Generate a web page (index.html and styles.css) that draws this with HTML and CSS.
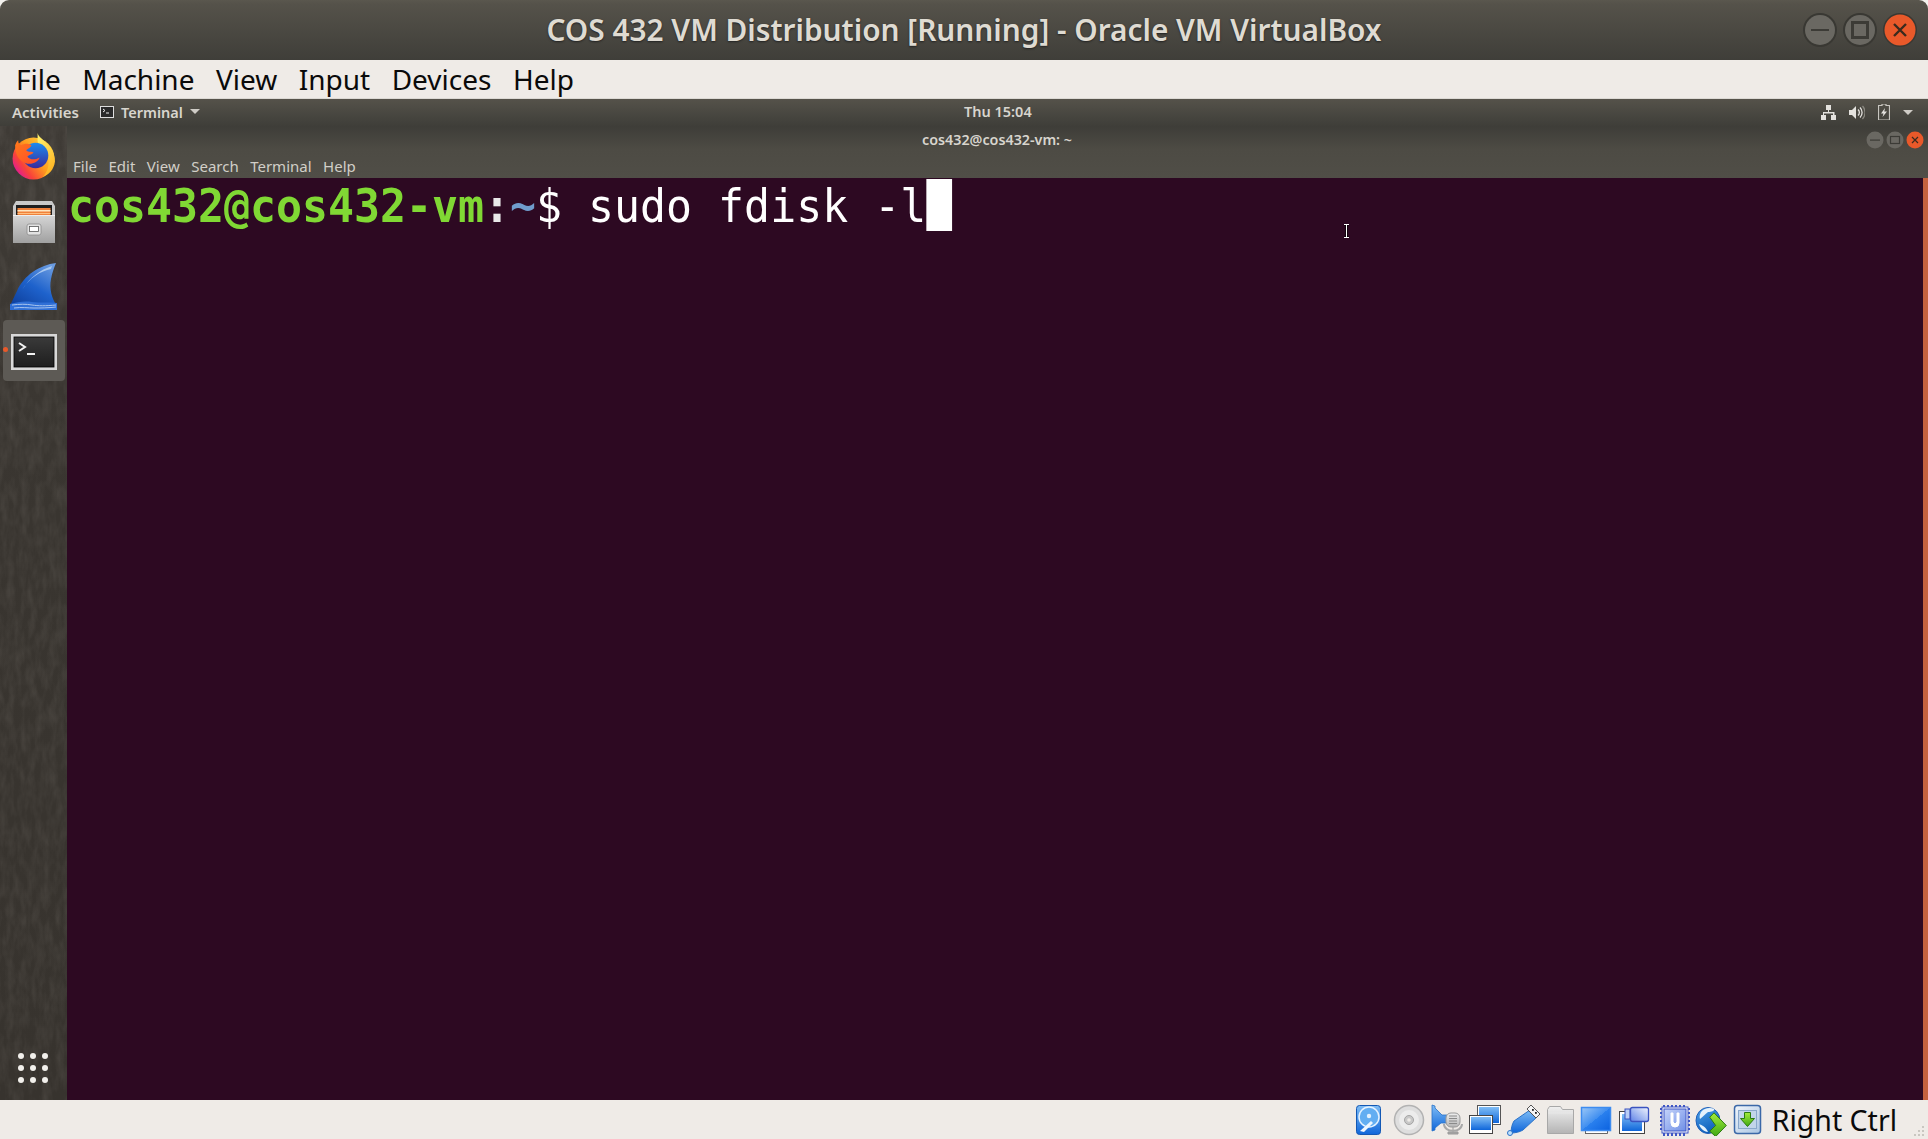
FILE: index.html
```html
<!DOCTYPE html>
<html lang="en">
<head>
<meta charset="utf-8">
<title>COS 432 VM Distribution [Running] - Oracle VM VirtualBox</title>
<link rel="stylesheet" href="styles.css">
</head>
<body>
<svg class="defs" width="0" height="0" aria-hidden="true">
  <defs>
    <linearGradient id="ffBase" x1="0.9" y1="0.2" x2="0.1" y2="0.8"><stop offset="0" stop-color="#ffd23c"/><stop offset="0.45" stop-color="#ff9a1e"/><stop offset="0.8" stop-color="#f8423a"/><stop offset="1" stop-color="#e3208a"/></linearGradient>
    <linearGradient id="ffFlame" x1="0.3" y1="0" x2="0.7" y2="1"><stop offset="0" stop-color="#fff06a"/><stop offset="1" stop-color="#ffb01e"/></linearGradient>
    <linearGradient id="ffGlobe" x1="0.5" y1="0" x2="0.5" y2="1"><stop offset="0" stop-color="#1c8cf0"/><stop offset="1" stop-color="#3a2a9c"/></linearGradient>
    <linearGradient id="ffFox" x1="0" y1="0" x2="1" y2="1"><stop offset="0" stop-color="#ff7a1a"/><stop offset="1" stop-color="#ff4a2a"/></linearGradient>
    <linearGradient id="cab" x1="0" y1="0" x2="0" y2="1"><stop offset="0" stop-color="#d6d6d6"/><stop offset="1" stop-color="#a0a0a0"/></linearGradient>
    <linearGradient id="shark" x1="0.8" y1="0" x2="0.1" y2="1"><stop offset="0" stop-color="#6a9be0"/><stop offset="0.5" stop-color="#1e62cc"/><stop offset="1" stop-color="#0e3f9c"/></linearGradient>
    <linearGradient id="termFace" x1="0" y1="0" x2="0" y2="1"><stop offset="0" stop-color="#3a3a3a"/><stop offset="1" stop-color="#1e1e1e"/></linearGradient>
    <linearGradient id="vbBlue" x1="0" y1="0" x2="0" y2="1"><stop offset="0" stop-color="#7fbdf5"/><stop offset="1" stop-color="#0f66da"/></linearGradient>
    <linearGradient id="vbDiag" x1="0" y1="0" x2="1" y2="1"><stop offset="0" stop-color="#9cc8f7"/><stop offset="0.5" stop-color="#3f8ef0"/><stop offset="0.5" stop-color="#2a80ee"/><stop offset="1" stop-color="#0b62e0"/></linearGradient>
    <linearGradient id="vbCam" x1="0" y1="1" x2="1" y2="0"><stop offset="0" stop-color="#5f82e8"/><stop offset="0.5" stop-color="#a8bdf2"/><stop offset="1" stop-color="#f2f5fd"/></linearGradient>
    <linearGradient id="vbGrey" x1="0" y1="0" x2="0" y2="1"><stop offset="0" stop-color="#f0f0f0"/><stop offset="1" stop-color="#b4b4b4"/></linearGradient>
    <linearGradient id="vbGreen" x1="0" y1="0" x2="0" y2="1"><stop offset="0" stop-color="#a4ec3c"/><stop offset="1" stop-color="#3ea812"/></linearGradient>
    <linearGradient id="vbChip" x1="0" y1="0" x2="1" y2="1"><stop offset="0" stop-color="#c6d4fa"/><stop offset="1" stop-color="#6f8fe6"/></linearGradient>
    <linearGradient id="vbSq" x1="0" y1="0" x2="1" y2="1"><stop offset="0" stop-color="#f2f6fb"/><stop offset="1" stop-color="#a9c4e2"/></linearGradient>
    <linearGradient id="vbGlobe" x1="0.2" y1="0" x2="0.6" y2="1"><stop offset="0" stop-color="#4a9ee8"/><stop offset="1" stop-color="#0b5cb8"/></linearGradient>
    <filter id="grain" x="0" y="0" width="100%" height="100%"><feTurbulence type="fractalNoise" baseFrequency="0.14 0.05" numOctaves="3" seed="4"/><feColorMatrix values="0 0 0 0 0.5  0 0 0 0 0.46  0 0 0 0 0.42  0.2 0 0 0 -0.07"/></filter>
  </defs>
</svg>

<div class="window">
  <header class="titlebar">
    <h1 class="title">COS 432 VM Distribution [Running] - Oracle VM VirtualBox</h1>
    <div class="wm-buttons">
      <svg class="wm" viewBox="0 0 36 36"><circle cx="18" cy="18" r="17" class="wm-ring"/><circle cx="18" cy="18" r="15" class="wm-face"/><rect x="9" y="17" width="18" height="2" class="wm-glyph"/></svg>
      <svg class="wm" viewBox="0 0 36 36"><circle cx="18" cy="18" r="17" class="wm-ring"/><circle cx="18" cy="18" r="15" class="wm-face"/><rect x="10.500" y="10.500" width="15" height="15" class="wm-box"/></svg>
      <svg class="wm" viewBox="0 0 36 36"><circle cx="18" cy="18" r="17" class="wm-ring"/><circle cx="18" cy="18" r="15.500" class="wm-close"/><path d="M12 12 24 24M24 12 12 24" class="wm-x"/></svg>
    </div>
  </header>

  <nav class="menubar">
    <span>File</span><span>Machine</span><span>View</span><span>Input</span><span>Devices</span><span>Help</span>
  </nav>

  <main class="guest">
    <div class="panel">
      <span class="activities">Activities</span>
      <span class="app">
        <svg class="app-icon" viewBox="0 0 14 12"><rect x="0.500" y="0.500" width="13" height="11" fill="#2a2a2a" stroke="#ddd"/><path d="M3 3l2 1.500L3 6M6 7h3" fill="none" stroke="#eee"/></svg>
        Terminal
        <i class="caret"></i>
      </span>
      <span class="clock">Thu 15:04</span>
      <span class="tray">
        <svg class="tray-net" viewBox="0 0 15 15"><path d="M5 0h5v5H8v2h5.500v3H15v5h-5v-5h2V8.500H3V10h2v5H0v-5h2V7h5V5H5z" fill="#e4e2de"/></svg>
        <svg class="tray-vol" viewBox="0 0 16 15"><path d="M0 5h3l4-4v13l-4-4H0z" fill="#e4e2de"/><path d="M9 4.500a4 4 0 0 1 0 6M11 2.500a7 7 0 0 1 0 10" fill="none" stroke="#e4e2de" stroke-width="1.300"/><path d="M13.500 1a9.500 9.500 0 0 1 0 13" fill="none" stroke="#8a8880" stroke-width="1.300"/></svg>
        <svg class="tray-bat" viewBox="0 0 12 16"><path d="M4 0h4v1.500h3.500V16H.5V1.500H4z" fill="none" stroke="#c8c6c0" stroke-width="1.200"/><path d="M7 4 3 9.500h2.500L4.500 13 9 7.500H6.300z" fill="#e4e2de"/></svg>
        <i class="caret tray-caret"></i>
      </span>
    </div>

    <div class="desktop">
      <aside class="dock">
        <svg class="dock-grain" width="67" height="974"><rect width="67" height="974" filter="url(#grain)"/></svg>
        <svg class="dock-icon ff" viewBox="0 0 44 46">
          <circle cx="22" cy="25" r="20.500" fill="url(#ffBase)"/>
          <path d="M26 0c1 4 5 6 9 10 6 6 8 12 8 18-1 8-6 13-12 15 5-5 7-12 5-19C34 17 27 14 26 8z" fill="url(#ffFlame)"/>
          <circle cx="24" cy="22" r="12.500" fill="url(#ffGlobe)"/>
          <path d="M4 12c1-3 2-4 3-5 0 3 1 4 3 5 3-2 7-2 10 0-1 3-4 3-5 5 1 2 4 1 7 2-1 2-4 2-6 4 2 3 7 4 12 1-1 4-7 7-12 6C7 28 4 20 4 12z" fill="url(#ffFox)"/>
        </svg>
        <svg class="dock-icon files" viewBox="0 0 42 43">
          <path d="M3 1h36l3 5v36H0V6z" fill="#c9c9c9"/>
          <rect x="3" y="5" width="36" height="12" fill="#1e1e1e"/>
          <rect x="4.500" y="8" width="33" height="9" fill="#f0813a"/>
          <rect x="4.500" y="10" width="33" height="1.500" fill="#ffe6c0"/>
          <rect x="4.500" y="13" width="33" height="1" fill="#ffc080"/>
          <rect x="0" y="15" width="42" height="28" fill="url(#cab)"/>
          <rect x="0" y="15" width="42" height="1" fill="#eee"/>
          <rect x="14" y="24" width="14" height="11" rx="2" fill="#e2e2e2" stroke="#8c8c8c" stroke-width="0.800"/>
          <rect x="16.500" y="26.500" width="9" height="5" fill="#fff" stroke="#555" stroke-width="0.800"/>
        </svg>
        <svg class="dock-icon shark" viewBox="0 0 48 47">
          <path d="M46 0C30 2 14 12 7 28 4 34 2 38 0 43h47c-5-7-8-17-6-27 1-6 3-11 5-16z" fill="url(#shark)"/>
          <path d="M42 3C30 7 20 14 12 27 19 15 31 8 41 6z" fill="#a8c8f0"/>
          <path d="M0 41c8-2 14-3 22-2 8 1 17 0 25 1v7H0z" fill="#2f6fd6"/>
          <path d="M2 42c8-1 14-1 20 0s14 1 24 0M4 45c8-1 14 0 20 0s14 0 22-1" fill="none" stroke="#a8c4ee" stroke-width="1"/>
        </svg>
        <div class="dock-active">
          <i class="running"></i>
          <svg class="term-icon" viewBox="0 0 46 36"><rect x="0" y="0" width="46" height="36" fill="#d8d8d8"/><rect x="3" y="3" width="40" height="30" fill="url(#termFace)"/><rect x="3" y="3" width="40" height="30" fill="none" stroke="#000" stroke-width="0.800"/><path d="M8 9l6 4-6 4" fill="none" stroke="#f2f2f2" stroke-width="2"/><rect x="16" y="19" width="8" height="2" fill="#f2f2f2"/></svg>
        </div>
        <div class="apps-grid"><i></i><i></i><i></i><i></i><i></i><i></i><i></i><i></i><i></i></div>
      </aside>

      <section class="term-window">
        <div class="term-head">
          <div class="term-title">cos432@cos432-vm: ~</div>
          <div class="term-buttons">
            <svg class="tb" viewBox="0 0 18 18"><circle cx="9" cy="9" r="8.500" class="wm-face"/><rect x="4" y="8.500" width="10" height="1.200" class="wm-glyph"/></svg>
            <svg class="tb" viewBox="0 0 18 18"><circle cx="9" cy="9" r="8.500" class="wm-face"/><rect x="4.500" y="5.500" width="9" height="7" class="wm-box wm-box-s"/></svg>
            <svg class="tb" viewBox="0 0 18 18"><circle cx="9" cy="9" r="8.500" class="wm-close"/><path d="M6 6l6 6M12 6l-6 6" class="wm-x wm-x-s"/></svg>
          </div>
          <nav class="term-menu"><span>File</span><span>Edit</span><span>View</span><span>Search</span><span>Terminal</span><span>Help</span></nav>
        </div>
        <div class="term-body">
          <div class="line"><b class="p-user">cos432@cos432-vm</b><b class="p-colon">:</b><b class="p-path">~</b><span class="p-dollar">$</span> sudo fdisk -l<span class="cursor">&nbsp;</span></div>
          <svg class="ibeam" viewBox="0 0 7 14"><path d="M1 .5h5M3.500.5v13M1 13.500h5" fill="none" stroke="#000" stroke-width="2.200"/><path d="M1 .5h5M3.500.5v13M1 13.500h5" fill="none" stroke="#fff" stroke-width="1"/></svg>
          <i class="scroll-edge"></i>
        </div>
      </section>
    </div>
  </main>

  <footer class="statusbar">
    <svg class="st" viewBox="0 0 38 32"><rect x="4.500" y="1.500" width="24" height="29" rx="3" fill="url(#vbBlue)" stroke="#1358b4"/><circle cx="17" cy="13" r="10" fill="#63aef2" stroke="#e4f2ff" stroke-width="1.500"/><circle cx="17" cy="12" r="2.200" fill="#e4f2ff"/><path d="M8 27l11-10 2 2-9 9z" fill="#eef6ff"/></svg>
    <svg class="st" viewBox="0 0 38 32"><circle cx="19" cy="16" r="14.500" fill="#dedede" stroke="#b2b2b2" stroke-width="1.500"/><circle cx="19" cy="16" r="10" fill="#ececec"/><circle cx="19" cy="16" r="4.500" fill="#c8c8c8" stroke="#a4a4a4"/><circle cx="19" cy="16" r="1.800" fill="#efece8"/></svg>
    <svg class="st" viewBox="0 0 38 32"><path d="M4 1l3 1v2l7 7h5v8h-6l-6 5v2l-3 1z" fill="url(#vbBlue)" stroke="#2a72c8" stroke-width="0.800"/><rect x="18" y="9" width="14" height="14" rx="5" fill="url(#vbGrey)" stroke="#999"/><path d="M21 12h8M21 14.500h8M21 17h8M21 19.500h8" stroke="#8a8a8a"/><path d="M25 23v5M20 30h10v-2H20z" fill="#a6a6a6" stroke="#999"/><path d="M16 20c0 9 18 9 18 0" fill="none" stroke="#a8a8a8" stroke-width="2"/></svg>
    <svg class="st" viewBox="0 0 38 32"><rect x="11.500" y="1.500" width="23" height="19" fill="#fff" stroke="#555"/><rect x="13" y="3" width="20" height="16" fill="url(#vbBlue)"/><rect x="3.500" y="11.500" width="23" height="18" fill="#fff" stroke="#444"/><rect x="5" y="13" width="20" height="13" fill="url(#vbBlue)"/></svg>
    <svg class="st" viewBox="0 0 38 32"><path d="M26 6l7 7-14 13c-3 2-8 3-12 3 0-4 1-9 3-12z" fill="url(#vbBlue)" stroke="#2a72c8"/><path d="M27 1l9 9-4 4-9-9z" fill="#f4f4f4" stroke="#555"/><rect x="28" y="5" width="1.800" height="1.800" fill="#222"/><rect x="31" y="8" width="1.800" height="1.800" fill="#222"/><circle cx="6" cy="29" r="2.500" fill="#bfe0fb" stroke="#2a72c8"/></svg>
    <svg class="st" viewBox="0 0 38 32"><path d="M5.500 5.500l2-3h11l2 3h11v24h-26z" fill="url(#vbGrey)" stroke="#a8a8a8"/><path d="M6 9h25" stroke="#e8e8e8"/></svg>
    <svg class="st" viewBox="0 0 38 32"><rect x="5.500" y="26" width="22" height="3.500" fill="#fff" stroke="#444" stroke-width="0.800"/><rect x="1.500" y="3.500" width="29" height="23" fill="url(#vbDiag)" stroke="#3d8cf0" stroke-width="1.500"/></svg>
    <svg class="st" viewBox="0 0 38 32"><rect x="1.500" y="7.500" width="25" height="22" fill="#fff" stroke="#444"/><rect x="4" y="10" width="20" height="17" fill="url(#vbBlue)"/><rect x="7" y="5" width="5" height="10" fill="#b9cdf5" stroke="#3b53c0"/><rect x="12.500" y="3.500" width="18" height="14" rx="2" fill="url(#vbCam)" stroke="#3b53c0" stroke-width="1.300"/></svg>
    <svg class="st" viewBox="0 0 38 32"><path d="M8 1v31M12 1v31M16 1v31M20 1v31M24 1v31M28 1v31M4 5h30M4 9h30M4 13h30M4 17h30M4 21h30M4 25h30" stroke="#3f56c4" stroke-width="2"/><rect x="6" y="3" width="26" height="26" fill="#fff" stroke="#3f56c4"/><rect x="8" y="5" width="22" height="22" fill="url(#vbChip)" stroke="#3f56c4"/><path d="M15 9v10a4 4 0 0 0 8 0V9h-2v9l-2 2-2-2V9z" fill="#fff" stroke="#fff"/></svg>
    <svg class="st" viewBox="0 0 38 32"><ellipse cx="14" cy="16.500" rx="12" ry="13" fill="url(#vbGlobe)" stroke="#1f5fb8"/><path d="M7 8c3-4 9-5 13-3 1 2-3 3-6 3-3 2-5 5-8 7-1-2 0-5 1-7zM5 20c3 1 7 3 9 8-4 0-8-4-9-8z" fill="#e6f2fc"/><path d="M15.700 13.200 20 8.800l12.300 12.700L21.700 32.500l-6-5.300 6-5.700z" fill="url(#vbGreen)" stroke="#2c7a10"/></svg>
    <svg class="st" viewBox="0 0 38 32"><rect x="2.500" y="1.500" width="26" height="28" rx="3" fill="url(#vbSq)" stroke="#3b68a8" stroke-width="1.500"/><rect x="6.500" y="6.500" width="18" height="18" fill="#c2d5ea" stroke="#8aa8cc"/><path d="M12.500 8.500h6v6h4l-7 8-7-8h4z" fill="url(#vbGreen)" stroke="#2c7a10"/></svg>
    <span class="host-key">Right Ctrl</span>
    <svg class="grip" viewBox="0 0 14 14"><g fill="#c9c6c0"><rect x="10" y="2" width="2" height="2"/><rect x="6" y="6" width="2" height="2"/><rect x="10" y="6" width="2" height="2"/><rect x="2" y="10" width="2" height="2"/><rect x="6" y="10" width="2" height="2"/><rect x="10" y="10" width="2" height="2"/></g></svg>
  </footer>
</div>
</body>
</html>
```

FILE: styles.css
```css
* { box-sizing: border-box; }
html, body { margin: 0; height: 100%; background: #f4f2ee; overflow: hidden; }
body { font-family: "Noto Sans", "Open Sans", sans-serif; }
.defs { position: absolute; }

.window { display: flex; flex-direction: column; width: 1928px; height: 1139px; }

/* Host window title bar */
.titlebar {
  position: relative; height: 60px; flex: none;
  display: flex; align-items: center; justify-content: center;
  background: linear-gradient(#5a574e 0, #55524a 4px, #3f3e39 100%);
  border-radius: 9px 9px 0 0;
}
.title {
  margin: -2px 0 0; font-size: 29.800px; font-weight: 600; color: #dfdbd2;
  text-shadow: 0 1px 2px #222;
}
.wm-buttons { position: absolute; right: 10px; top: 12px; display: flex; gap: 4px; }
.wm { width: 36px; height: 36px; display: block; }
.wm-ring { fill: #393833; }
.wm-face { fill: #6a6862; }
.wm-glyph { fill: #3c3b36; }
.wm-box { fill: none; stroke: #3c3b36; stroke-width: 3; }
.wm-box-s { stroke-width: 1.200; }
.wm-close { fill: #e9592a; }
.wm-x { fill: none; stroke: #3a2a1e; stroke-width: 2.400; }
.wm-x-s { stroke-width: 1.200; }

/* Host menu */
.menubar {
  height: 39px; flex: none; background: #efebe7;
  display: flex; align-items: center; padding-left: 16px; gap: 21.500px;
  font-size: 28px; color: #0a0a0a;
  border-bottom: 1px solid #dcd9d4;
}

/* Guest */
.guest { flex: 1; display: flex; flex-direction: column; min-height: 0; }
.panel {
  position: relative; height: 27px; flex: none;
  display: flex; align-items: center; padding-left: 12px;
  background: linear-gradient(#55524a, #45443e 70%, #3f3e39);
  color: #d8d5ce; font-size: 15px; font-weight: 600;
}
.activities { width: 88px; position: relative; top: -1px; }
.app { display: flex; align-items: center; gap: 7px; position: relative; top: -1px; font-size: 14.500px; }
.app-icon { width: 14px; height: 12px; }
.caret { width: 0; height: 0; border: 5px solid transparent; border-top: 5px solid #cfccc6; border-bottom: 0; }
.clock { position: absolute; left: 964px; top: 2px; font-size: 14.500px; }
.tray { position: absolute; right: 15px; top: 5px; display: flex; align-items: center; gap: 13px; }
.tray-net { width: 15px; height: 15px; }
.tray-vol { width: 16px; height: 15px; }
.tray-bat { width: 12px; height: 16px; }

.desktop { flex: 1; display: flex; min-height: 0; }

/* Dock */
.dock {
  position: relative; width: 67px; flex: none;
  display: flex; flex-direction: column; align-items: center;
  padding-top: 8px; overflow: hidden;
  background: linear-gradient(#3f3b36, #393530 40%, #37332e);
}
.dock-grain { position: absolute; left: 0; top: 0; }
.dock-icon { position: relative; display: block; }
.ff { width: 45px; height: 47px; margin-top: -1px; }
.files { width: 42px; height: 43px; margin-top: 20px; }
.shark { width: 48px; height: 47px; margin-top: 20px; }
.dock-active {
  position: relative; width: 62px; height: 61px; margin-top: 10px;
  background: #5d5a55; border-radius: 4px;
  display: flex; align-items: center; justify-content: center;
  padding-top: 2px;
}
.term-icon { width: 46px; height: 36px; }
.running { position: absolute; left: 0; top: 27px; width: 5px; height: 5px; border-radius: 50%; background: #e9592a; }
.apps-grid {
  position: absolute; left: 18px; bottom: 17px;
  display: grid; grid-template-columns: repeat(3, 6px); grid-auto-rows: 6px; gap: 6px;
}
.apps-grid i { background: #f2f0ec; border-radius: 50%; }

/* Terminal window */
.term-window { flex: 1; display: flex; flex-direction: column; min-width: 0; }
.term-head {
  position: relative; height: 52px; flex: none;
  background: linear-gradient(#3e3d38, #4d4b44 45%, #504e47);
  color: #d8d5ce;
}
.term-title { position: absolute; left: 855px; top: 4px; font-size: 14.300px; font-weight: 600; }
.term-buttons { position: absolute; right: 4px; top: 5px; display: flex; gap: 2px; }
.tb { width: 18px; height: 18px; display: block; }
.term-menu { position: absolute; left: 6px; top: 30px; display: flex; gap: 11.500px; font-size: 15px; color: #d2cfc8; }

.term-body { position: relative; flex: 1; background: #2d0922; padding: 2px 0 0 0; overflow: hidden; }
.line {
  font-family: "DejaVu Sans Mono", "Liberation Mono", monospace;
  font-size: 47px; line-height: 52px; color: #fff; white-space: pre;
  transform: scaleX(0.919); transform-origin: 0 0;
  margin-left: 1px;
}
.line b { font-weight: 700; }
.p-user { color: #80d834; }
.p-colon { color: #e8e8e8; }
.p-path { color: #6f9ccc; }
.cursor { display: inline-block; height: 52px; vertical-align: top; margin-top: -1px; background: #fff; }
.ibeam { position: absolute; left: 1276px; top: 46px; width: 7px; height: 14px; }
.scroll-edge { position: absolute; right: 0; top: 0; bottom: 0; width: 5px; background: #c4623f; }

/* Status bar */
.statusbar {
  position: relative; height: 39px; flex: none; background: #efebe7;
  display: flex; align-items: center; justify-content: flex-end; padding-right: 31px;
}
.st { width: 38px; height: 32px; display: block; }
.host-key { font-size: 28.500px; color: #0a0a0a; margin-left: 2px; }
.grip { position: absolute; right: 2px; bottom: 1px; width: 14px; height: 14px; }
```
